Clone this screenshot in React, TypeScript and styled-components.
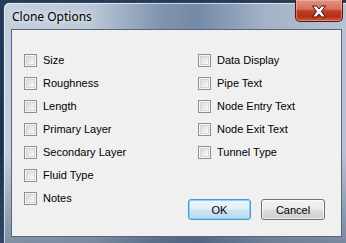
import React from "react";
import styled, { createGlobalStyle } from "styled-components";

const Global = createGlobalStyle`
    html, body {
        margin: 0;
        padding: 0;
        width: 346px;
        height: 243px;
        overflow: hidden;
        background: linear-gradient(180deg, #223c5e 0%, #1b3352 60%, #2b4668 100%);
    }
    #root {
        width: 346px;
        height: 243px;
    }
`;

const Window = styled.div`
    margin: 2px 0 0 3px;
    width: 350px;
    height: 250px;
    box-sizing: border-box;
    border-top-left-radius: 6px;
    border: 1px solid #36455a;
    border-right: none;
    border-bottom: none;
    background:
        linear-gradient(180deg, rgba(255, 255, 255, 0) 0%, rgba(255, 255, 255, 0) 60%, rgba(30, 50, 80, 0.45) 100%),
        linear-gradient(90deg, #c4d0de 0%, #b9c7d7 25%, #8194ae 45%, #7489a7 55%, #a3b2c6 75%, #b8c5d4 100%);
    box-shadow: inset 1px 1px 0 rgba(255, 255, 255, 0.6);
    display: flex;
    flex-direction: column;
    font-family: "Liberation Sans", Arial, sans-serif;
`;

const TitleBar = styled.div`
    height: 26px;
    display: flex;
    align-items: flex-start;
    position: relative;
`;

const Title = styled.div`
    margin: 6px 0 0 8px;
    font-family: "Noto Sans", "Open Sans", sans-serif;
    font-size: 12px;
    line-height: 16px;
    color: #000;
    text-shadow: 0 0 6px rgba(255, 255, 255, 0.9), 0 0 10px rgba(255, 255, 255, 0.7);
`;

const CloseButton = styled.div`
    position: absolute;
    top: -3px;
    left: 291px;
    width: 48px;
    height: 22px;
    box-sizing: border-box;
    border: 1px solid #4a1a14;
    border-top: none;
    border-radius: 0 0 5px 5px;
    background: linear-gradient(180deg, #e09484 0%, #d6735c 42%, #c33d24 52%, #b2301a 78%, #d2583e 100%);
    box-shadow: inset 0 0 0 1px rgba(255, 200, 185, 0.45);
    display: flex;
    align-items: center;
    justify-content: center;
    padding-top: 2px;
`;

const Client = styled.div`
    margin-left: 7px;
    width: 331px;
    height: 208px;
    box-sizing: border-box;
    background: #f0f0f0;
    border: 1px solid #58667a;
    display: flex;
    padding: 24px 16px 16px 12px;
`;

const Column = styled.div<{ $width?: number }>`
    display: flex;
    flex-direction: column;
    gap: 10px;
    width: ${(p) => (p.$width ? `${p.$width}px` : "auto")};
    flex: ${(p) => (p.$width ? "none" : "1")};
`;

const Row = styled.label`
    display: flex;
    align-items: center;
    height: 13px;
    font-size: 11px;
    line-height: 13px;
    color: #000;
    white-space: nowrap;
`;

const Box = styled.span`
    width: 13px;
    height: 13px;
    box-sizing: border-box;
    border: 1px solid #8e8f8f;
    background: #f6f6f6;
    padding: 1px;
    margin-right: 6px;
    flex: none;
    display: flex;

    &::after {
        content: "";
        flex: 1;
        border: 1px solid #d3d6da;
        background: linear-gradient(135deg, #d8dadd 0%, #e9eaeb 50%, #fafafa 100%);
    }
`;

const ButtonRow = styled.div`
    margin-top: auto;
    margin-left: -20px;
    display: flex;
    justify-content: flex-end;
    gap: 10px;
`;

const Button = styled.div<{ $default?: boolean }>`
    width: ${(p) => (p.$default ? 63 : 64)}px;
    height: 21px;
    box-sizing: border-box;
    border: 1px solid ${(p) => (p.$default ? "#3c9ed8" : "#707070")};
    border-radius: 3px;
    background: ${(p) =>
        p.$default
            ? "linear-gradient(180deg, #ecf5fb 0%, #e2eff8 48%, #cbe3f3 52%, #bcdaee 100%)"
            : "linear-gradient(180deg, #f2f2f2 0%, #ebebeb 48%, #dddddd 52%, #cfcfcf 100%)"};
    box-shadow: inset 0 0 0 1px ${(p) => (p.$default ? "#8fd0f2" : "rgba(255, 255, 255, 0.7)")};
    display: flex;
    align-items: center;
    justify-content: center;
    font-size: 11px;
    color: #000;
`;

const left = ["Size", "Roughness", "Length", "Primary Layer", "Secondary Layer", "Fluid Type", "Notes"];
const right = ["Data Display", "Pipe Text", "Node Entry Text", "Node Exit Text", "Tunnel Type"];

const Check = ({ label }: { label: string }) => (
    <Row>
        <Box />
        {label}
    </Row>
);

export default function App() {
    return (
        <>
            <Global />
            <Window>
                <TitleBar>
                    <Title>Clone Options</Title>
                    <CloseButton>
                        <svg width="16" height="13" viewBox="0 0 16 13">
                            <path
                                d="M1.5 1 L5.5 1 L8 4 L10.5 1 L14.5 1 L10.4 6.5 L14.5 12 L10.5 12 L8 9 L5.5 12 L1.5 12 L5.6 6.5 Z"
                                fill="#ffffff"
                                stroke="#3a1410"
                                strokeWidth="1"
                                strokeLinejoin="round"
                            />
                        </svg>
                    </CloseButton>
                </TitleBar>
                <Client>
                    <Column $width={174}>
                        {left.map((l) => (
                            <Check key={l} label={l} />
                        ))}
                    </Column>
                    <Column>
                        {right.map((l) => (
                            <Check key={l} label={l} />
                        ))}
                        <ButtonRow>
                            <Button $default>OK</Button>
                            <Button>Cancel</Button>
                        </ButtonRow>
                    </Column>
                </Client>
            </Window>
        </>
    );
}
